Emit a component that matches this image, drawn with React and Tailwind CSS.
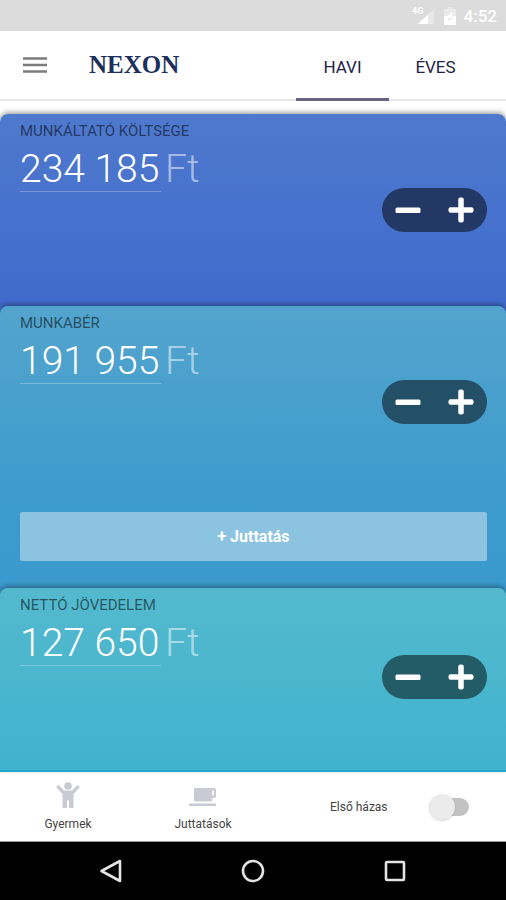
import { useState } from "react";
import clsx from "clsx";

const format = (n) => String(n).replace(/\B(?=(\d{3})+(?!\d))/g, " ");

function StatusBar() {
  return (
    <div className="h-[31px] shrink-0 bg-[#dcdcdc] flex items-center justify-end pr-[9px] text-white">
      <svg width="24" height="20" viewBox="0 0 24 20" aria-hidden="true">
        <path d="M22 3v15H5z" fill="currentColor" opacity=".35" />
        <path d="M16 9v9H6z" fill="currentColor" />
        <text x="0" y="8" fontSize="9" fontWeight="700" fill="currentColor">4G</text>
      </svg>
      <svg className="ml-2 mr-2" width="12" height="18" viewBox="0 0 12 18" aria-hidden="true">
        <path d="M3.500 0h5v2H12v8H0V2h3.500z" fill="currentColor" opacity=".4" />
        <path d="M0 9h4l4-4v4h4v9H0z" fill="currentColor" />
        <path d="M4 11l1.500 2L9 9.500" fill="none" stroke="#dcdcdc" strokeWidth="1" />
      </svg>
      <span className="text-[17px] leading-5 font-medium">4:52</span>
    </div>
  );
}

function Header({ period, setPeriod }) {
  const tabs = [
    { id: "month", label: "HAVI" },
    { id: "year", label: "ÉVES" },
  ];

  return (
    <header className="h-[70px] shrink-0 bg-white flex items-stretch border-b-2 border-[#e8e8e8]">
      <button aria-label="Menü" className="pl-[23px] pr-6 cursor-pointer">
        <svg width="24" height="18" viewBox="0 0 24 18" aria-hidden="true">
          <path d="M0 2.500h24M0 9h24M0 15.500h24" stroke="#7c7c7c" strokeWidth="2.600" />
        </svg>
      </button>
      <div className="flex items-center pl-[18px] font-['Liberation_Serif',serif] text-[25px] leading-8 font-bold text-[#1d2f5c]">
        NEXON
      </div>
      <div className="ml-auto mr-6 -mb-0.5 flex">
        {tabs.map((tab) => (
          <button
            key={tab.id}
            onClick={() => setPeriod(tab.id)}
            className={clsx(
              "w-[93px] border-b-[3px] pt-1 text-[17px] leading-5 text-[#1d2247] cursor-pointer",
              period === tab.id ? "border-[#666480]" : "border-transparent"
            )}
          >
            {tab.label}
          </button>
        ))}
      </div>
    </header>
  );
}

function Stepper({ onMinus, onPlus, color }) {
  return (
    <div className={clsx("flex h-11 w-[105px] rounded-full", color)}>
      <button onClick={onMinus} aria-label="Csökkentés" className="flex-1 flex items-center justify-center cursor-pointer">
        <svg width="26" height="26" viewBox="0 0 26 26" aria-hidden="true">
          <rect x="0.500" y="10.500" width="25" height="5.500" rx="1.500" fill="#fff" />
        </svg>
      </button>
      <button onClick={onPlus} aria-label="Növelés" className="flex-1 flex items-center justify-center cursor-pointer">
        <svg width="26" height="26" viewBox="0 0 26 26" aria-hidden="true">
          <rect x="0.500" y="10.250" width="25" height="5.500" rx="2" fill="#fff" />
          <rect x="10.250" y="0.500" width="5.500" height="25" rx="2" fill="#fff" />
        </svg>
      </button>
    </div>
  );
}

function AmountCard({ id, label, start, className, rowClass, stepperColor, children }) {
  const [amount, setAmount] = useState(start);

  return (
    <section className={clsx("relative rounded-t-lg bg-linear-to-b shadow-[0_-2px_5px_rgba(0,0,0,0.35)]", className)}>
      <div className={clsx("flex items-center justify-between pl-5 pr-[19px]", rowClass)}>
        <div className="self-start pt-[9px]">
          <label htmlFor={id} className="block text-[15px] leading-4 text-black/55">
            {label}
          </label>
          <div className="mt-1 flex items-start text-[39px] leading-[48px] font-light">
            <input
              id={id}
              type="text"
              inputMode="numeric"
              value={format(amount)}
              onChange={(e) => setAmount(Number(e.target.value.replace(/\D/g, "")))}
              className="h-[49px] w-[141px] border-b border-white/25 bg-transparent pt-1 text-white outline-none"
            />
            <span className="ml-1 pt-0.5 text-white/50">Ft</span>
          </div>
        </div>
        <Stepper
          color={stepperColor}
          onMinus={() => setAmount(amount - 1000)}
          onPlus={() => setAmount(amount + 1000)}
        />
      </div>
      {children}
    </section>
  );
}

function BottomBar() {
  const [married, setMarried] = useState(false);

  return (
    <div className="h-[70px] shrink-0 bg-white flex border-b border-[#999] text-[12px] leading-4 text-[#444]">
      <button className="w-[136px] flex flex-col items-center pt-2 cursor-pointer">
        <svg className="mb-1" width="32" height="32" viewBox="0 0 32 32" fill="#c9cad3" aria-hidden="true">
          <circle cx="16" cy="6" r="3.800" />
          <path d="M6.500 5l5.500 5.500h8L25.500 5l2.300 2.300-6.300 6.700V28h-4.500v-7.500h-2V28h-4.500V14L4.200 7.300z" />
        </svg>
        Gyermek
      </button>
      <button className="w-[134px] flex flex-col items-center pt-2 cursor-pointer">
        <svg className="mb-1" width="32" height="32" viewBox="0 0 32 32" fill="#c9cad3" aria-hidden="true">
          <path d="M7 9q0-1 1-1h19q2 0 2 2v6q0 2-2 2h-2v2.500q0 1-1 1H8q-1 0-1-1z M25 10.500v5h1.800v-5z" fillRule="evenodd" />
          <path d="M2 23.500h27v2.500H2z" />
        </svg>
        Juttatások
      </button>
      <label className="flex-1 flex items-center justify-between pl-[60px] pr-[37px] cursor-pointer">
        Első házas
        <input
          type="checkbox"
          checked={married}
          onChange={(e) => setMarried(e.target.checked)}
          className="peer sr-only"
        />
        <span className="flex h-[18px] w-10 items-center rounded-full bg-[#c2c2c2] peer-checked:justify-end">
          <span className="size-[26px] rounded-full bg-[#ebebeb] shadow-[0_1px_2px_rgba(0,0,0,0.15)]" />
        </span>
      </label>
    </div>
  );
}

function AndroidNav() {
  return (
    <nav className="flex-1 min-h-[58px] bg-black flex items-center justify-center gap-[118px] text-[#e4e4e4]">
      <button aria-label="Vissza">
        <svg width="24" height="24" viewBox="0 0 24 24" fill="none" stroke="currentColor" strokeWidth="2.600" strokeLinejoin="round">
          <path d="M21 2v20L2.500 12z" />
        </svg>
      </button>
      <button aria-label="Kezdőképernyő">
        <svg width="24" height="24" viewBox="0 0 24 24" fill="none" stroke="currentColor" strokeWidth="2.600">
          <circle cx="12" cy="12" r="10" />
        </svg>
      </button>
      <button aria-label="Áttekintés">
        <svg width="24" height="24" viewBox="0 0 24 24" fill="none" stroke="currentColor" strokeWidth="2.600">
          <rect x="3" y="3" width="18" height="18" rx="1" />
        </svg>
      </button>
    </nav>
  );
}

function App() {
  const [period, setPeriod] = useState("month");

  return (
    <div className="min-h-screen flex flex-col bg-white font-[Roboto,sans-serif]">
      <StatusBar />
      <Header period={period} setPeriod={setPeriod} />

      <main className="pt-[13px]">
        <AmountCard
          id="cost"
          label="MUNKÁLTATÓ KÖLTSÉGE"
          start={234185}
          className="from-[#4f79cd] to-[#3f6acc] pb-2"
          rowClass="min-h-48"
          stepperColor="bg-[#233864]"
        />

        <AmountCard
          id="wage"
          label="MUNKABÉR"
          start={191955}
          className="-mt-2 from-[#53a4cd] via-[#3d9bcd] via-65% to-[#3a99cd] pb-2"
          rowClass="min-h-48"
          stepperColor="bg-[#235066]"
        >
          <div className="pt-[14px] pr-[19px] pb-[27px] pl-5">
            <button className="h-[49px] w-full rounded-xs bg-[#8bc3e1] text-[16px] leading-5 font-bold text-white cursor-pointer">
              + Juttatás
            </button>
          </div>
        </AmountCard>

        <AmountCard
          id="net"
          label="NETTÓ JÖVEDELEM"
          start={127650}
          className="-mt-2 border-b-2 border-[#22a9c6] from-[#54b9cd] to-[#3fb3cf] pb-1"
          rowClass="min-h-[178px]"
          stepperColor="bg-[#235b66]"
        />
      </main>

      <BottomBar />
      <AndroidNav />
    </div>
  );
}

export default App;
